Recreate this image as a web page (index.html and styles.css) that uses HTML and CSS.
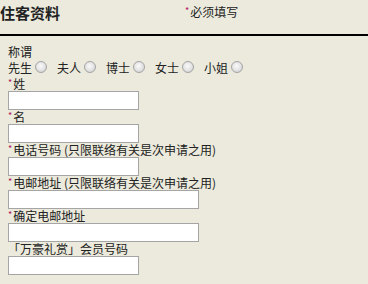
FILE: index.html
```html
<!DOCTYPE html>
<html lang="zh-CN">
<head>
    <meta charset="UTF-8">
    <title>住客资料</title>
    <link rel="stylesheet" href="styles.css">
</head>
<body>
    <div class="header">
        <h2 class="title">住客资料</h2>
        <span class="required-note"><span class="star">*</span>必须填写</span>
    </div>
    <hr class="rule">

    <form class="guest-form">
        <div class="label">称谓</div>
        <div class="radio-row">
            <label class="radio-item">先生<input type="radio" name="title" value="mr"></label>
            <label class="radio-item">夫人<input type="radio" name="title" value="mrs"></label>
            <label class="radio-item">博士<input type="radio" name="title" value="dr"></label>
            <label class="radio-item">女士<input type="radio" name="title" value="ms"></label>
            <label class="radio-item">小姐<input type="radio" name="title" value="miss"></label>
        </div>

        <label class="label" for="last"><span class="star">*</span>姓</label>
        <input class="field" type="text" id="last">

        <label class="label" for="first"><span class="star">*</span>名</label>
        <input class="field" type="text" id="first">

        <label class="label" for="phone"><span class="star">*</span>电话号码 (只限联络有关是次申请之用)</label>
        <input class="field" type="text" id="phone">

        <label class="label" for="email"><span class="star">*</span>电邮地址 (只限联络有关是次申请之用)</label>
        <input class="field wide" type="email" id="email">

        <label class="label" for="email2"><span class="star">*</span>确定电邮地址</label>
        <input class="field wide" type="email" id="email2">

        <label class="label" for="member">「万豪礼赏」会员号码</label>
        <input class="field" type="text" id="member">
    </form>
</body>
</html>
```

FILE: styles.css
```css
body {
    margin: 0;
    background-color: #ebeadc;
    color: #222;
    font-family: "Noto Sans CJK SC", "Noto Sans", sans-serif;
    font-size: 12px;
}
.header {
    display: flex;
    align-items: flex-start;
    height: 34px;
}
.title {
    margin: 3px 0 0 0;
    width: 185px;
    font-size: 15px;
    line-height: 20px;
    font-weight: bold;
    color: #222;
}
.required-note {
    margin-top: 4px;
    line-height: 16px;
}
.star {
    position: relative;
    top: -3px;
    line-height: 0;
    color: #b0105a;
    font-size: 9px;
    margin-right: 1px;
}
.rule {
    margin: 0;
    border: none;
    height: 2px;
    background: #000;
}
.guest-form {
    padding: 9px 0 0 8px;
}
.label {
    display: block;
    height: 14px;
    line-height: 14px;
    white-space: nowrap;
}
.radio-row {
    display: flex;
    height: 18px;
    align-items: center;
}
.radio-item {
    display: flex;
    align-items: center;
    line-height: 14px;
}
.radio-item input {
    appearance: none;
    -webkit-appearance: none;
    width: 12px;
    height: 12px;
    margin: 0 10px 3px 3px;
    border: 1px solid #a4a4a4;
    border-radius: 50%;
    background: radial-gradient(circle at 45% 40%, #fafafa 0, #e2e2e2 55%, #c8c8c8 100%);
    box-sizing: border-box;
}
.field {
    display: block;
    box-sizing: border-box;
    width: 131px;
    height: 19px;
    margin: 0;
    padding: 1px 3px;
    border: 1px solid #a5a5a5;
    background: #fff;
    font-size: 12px;
}
.field.wide {
    width: 191px;
}
```
